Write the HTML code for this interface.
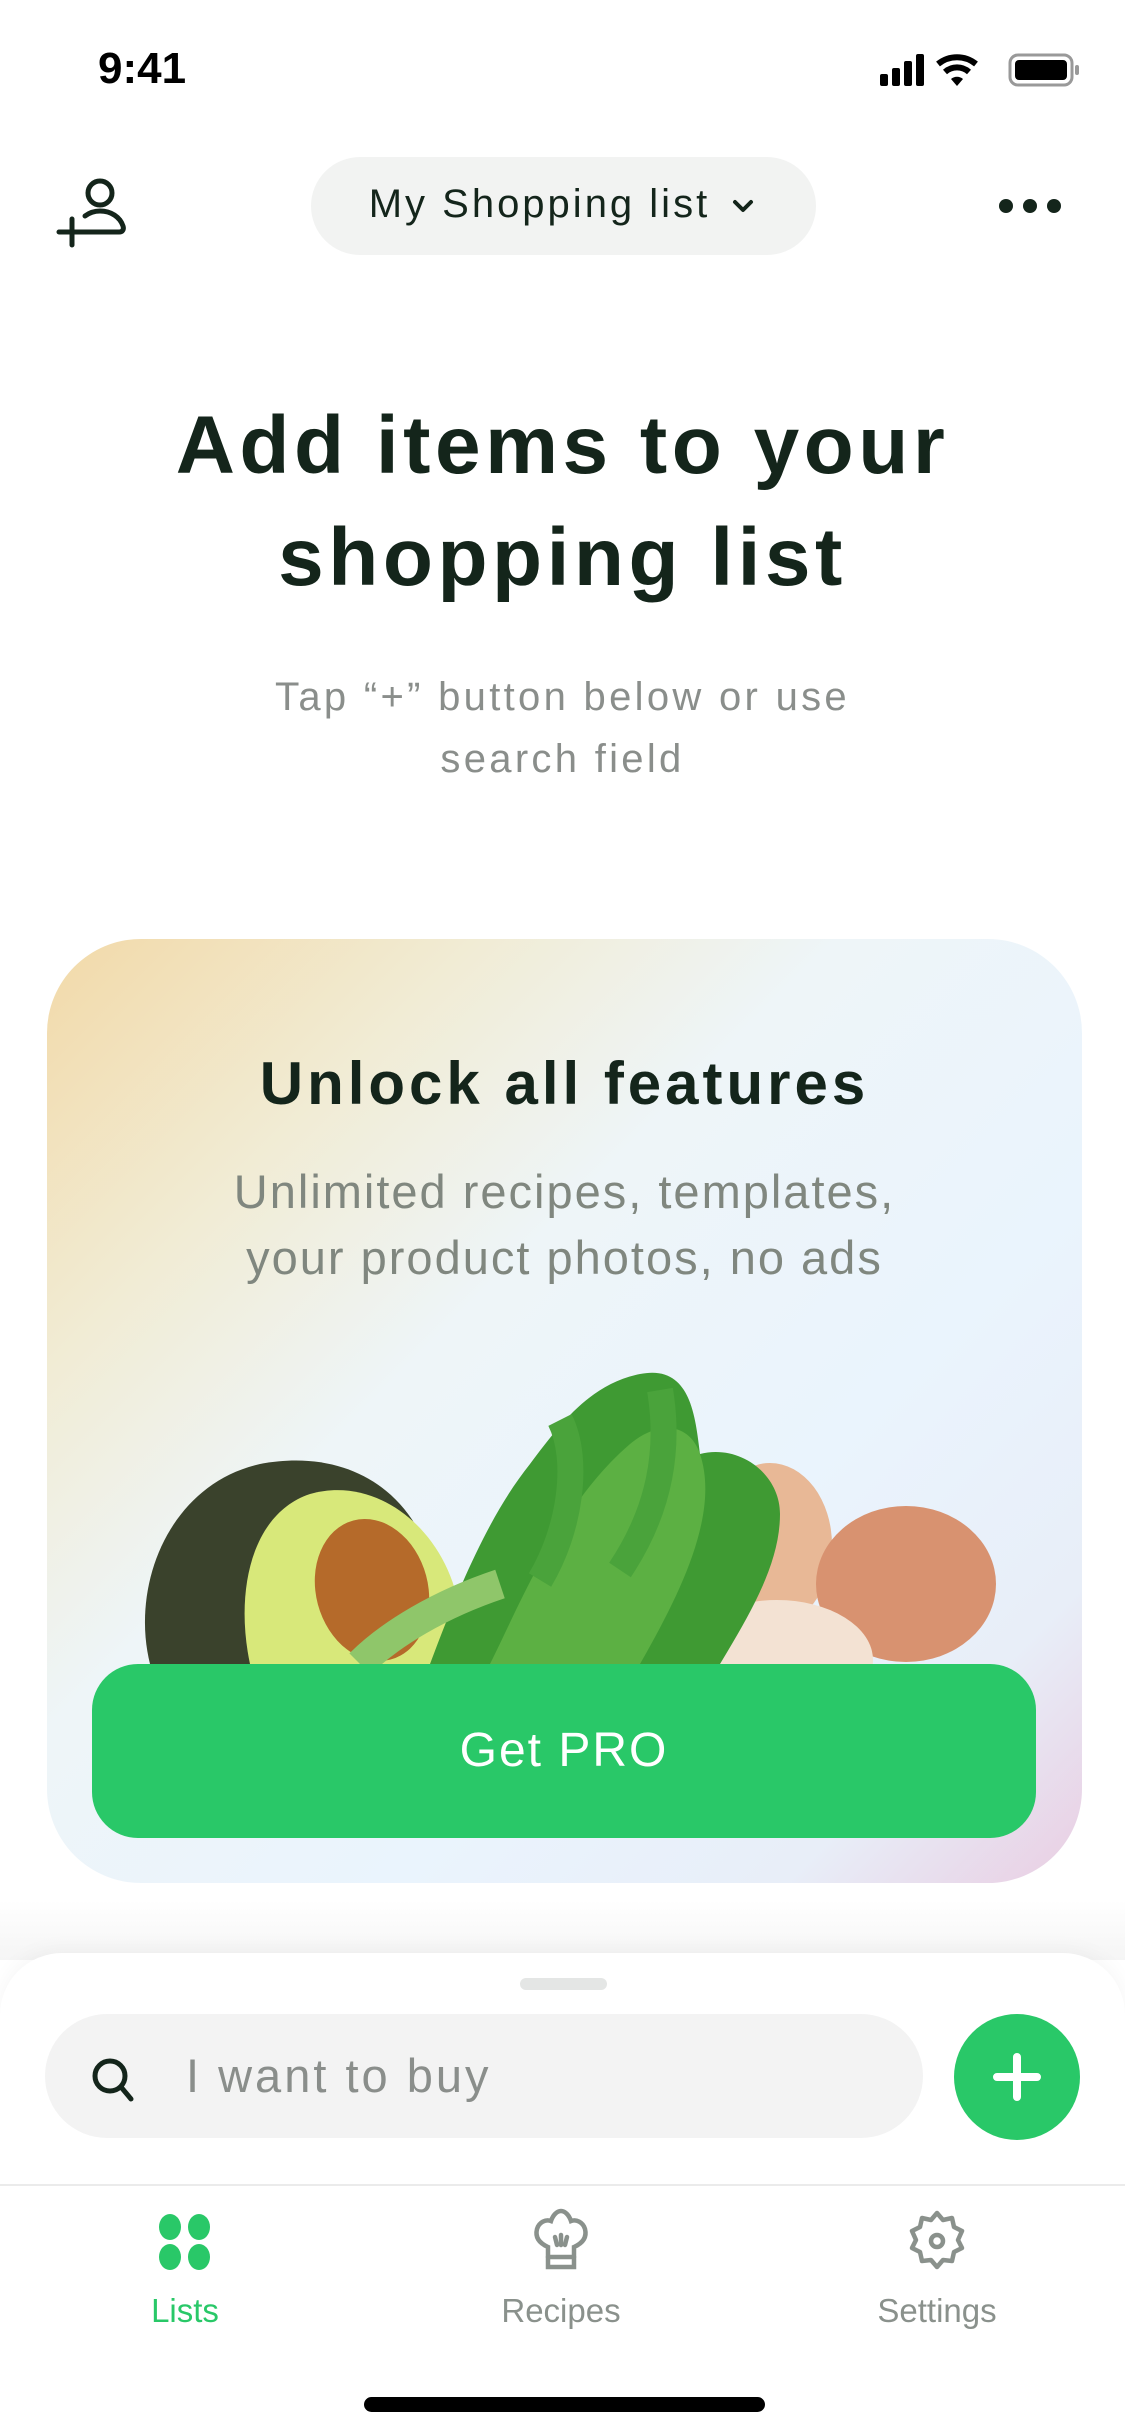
<!DOCTYPE html>
<html><head><meta charset="utf-8"><style>
*{margin:0;padding:0;box-sizing:border-box}
body{width:1125px;height:2436px;background:#fff;font-family:"Liberation Sans",sans-serif;position:relative;overflow:hidden;color:#14251b}
.abs{position:absolute}
.c{text-align:center;left:0;width:1125px}
</style></head><body>
<div class="abs" style="left:98px;top:44px;font-size:44px;font-weight:700;color:#000">9:41</div>
<svg class="abs" style="left:878px;top:50px" width="205" height="40" viewBox="0 0 205 40">
<rect x="2" y="24" width="8" height="12" rx="2" fill="#000"/><rect x="14" y="18" width="8" height="18" rx="2" fill="#000"/><rect x="26" y="11" width="8" height="25" rx="2" fill="#000"/><rect x="38" y="4" width="8" height="32" rx="2" fill="#000"/>
<path d="M60 14a30 30 0 0 1 38 0" stroke="#000" stroke-width="6" fill="none"/><path d="M67 22a18 18 0 0 1 24 0" stroke="#000" stroke-width="6" fill="none"/><path d="M73 29l6 7 6-7a9 9 0 0 0-12 0z" fill="#000"/>
<rect x="132" y="5" width="62" height="30" rx="8" fill="none" stroke="#999" stroke-width="3"/><rect x="137" y="10" width="52" height="20" rx="4" fill="#000"/><rect x="197" y="15" width="4" height="10" rx="2" fill="#999"/>
</svg>
<svg class="abs" style="left:56px;top:176px" width="72" height="72" viewBox="0 0 72 72">
<circle cx="44" cy="17" r="12" fill="none" stroke="#14251b" stroke-width="5"/><path d="M28 56h35c4 0 5-3 4-6-3-9-12-15-23-15-6 0-11 2-15 5" fill="none" stroke="#14251b" stroke-width="5" stroke-linecap="round"/><path d="M3 56h26M16 43v26" stroke="#14251b" stroke-width="5" stroke-linecap="round"/>
</svg>
<div class="abs" style="left:311px;top:157px;width:505px;height:98px;border-radius:49px;background:#f2f3f2"></div>
<div class="abs" style="left:311px;top:182px;width:505px;text-align:center;font-size:40px;font-weight:500;letter-spacing:3px">My Shopping list <svg width="30" height="30" viewBox="0 0 30 30" style="vertical-align:middle;margin-left:4px"><path d="M7 11l8 8 8-8" stroke="#14251b" stroke-width="4" fill="none" stroke-linecap="round" stroke-linejoin="round"/></svg></div>
<svg class="abs" style="left:996px;top:196px" width="68" height="20"><circle cx="10" cy="10" r="7" fill="#14251b"/><circle cx="34" cy="10" r="7" fill="#14251b"/><circle cx="58" cy="10" r="7" fill="#14251b"/></svg>
<div class="abs c" style="top:390px;font-size:82px;font-weight:700;line-height:112px;color:#14251b;letter-spacing:4.5px">Add items to your<br>shopping list</div>
<div class="abs c" style="top:666px;font-size:40px;line-height:62px;color:#8a8e8b;letter-spacing:3.3px">Tap “+” button below or use<br>search field</div>
<div class="abs" style="left:47px;top:939px;width:1035px;height:944px;border-radius:94px;overflow:hidden;background:linear-gradient(135deg,#f2d9a8 0%,#f1ecd5 22%,#eef5f8 40%,#eaf4fd 65%,#e8eef8 85%,#e9cde2 100%)">
<div class="abs" style="left:0;top:110px;width:1035px;text-align:center;font-size:60px;font-weight:700;color:#14251b;letter-spacing:4px">Unlock all features</div>
<div class="abs" style="left:0;top:220px;width:1035px;text-align:center;font-size:47px;line-height:66px;color:#80877f;letter-spacing:2px">Unlimited recipes, templates,<br>your product photos, no ads</div>
<svg class="abs" style="left:0;top:0" width="1035" height="944" viewBox="47 939 1035 944">
<ellipse cx="770" cy="1545" rx="62" ry="82" fill="#e8b896"/>
<ellipse cx="906" cy="1584" rx="90" ry="78" fill="#d89270"/>
<ellipse cx="777" cy="1660" rx="96" ry="60" fill="#f3e2d3"/>
<path d="M150 1664c-20-80 20-180 110-200 80-15 140 20 165 80l40 120z" fill="#3a422c"/>
<path d="M250 1664c-15-70 0-150 60-170 70-20 140 40 150 120l-20 50z" fill="#d8e87a"/>
<ellipse cx="372" cy="1590" rx="56" ry="72" transform="rotate(-15 372 1590)" fill="#b56a2a"/>
<path d="M430 1664c30-80 60-150 100-200 30-40 60-80 110-90 50-10 55 40 60 80 40-10 80 20 80 60 0 50-30 100-60 150z" fill="#3f9a33"/>
<path d="M490 1664c30-60 70-160 140-220 30-25 60-20 70 10 20 60-20 140-60 210z" fill="#5cb043"/>
<path d="M560 1420c20 40 10 110-20 160M660 1390c10 60 0 120-40 180" stroke="#4aa33b" stroke-width="26" fill="none"/>
<path d="M360 1664c30-30 80-60 140-80" stroke="#8fc66a" stroke-width="30" fill="none"/>
</svg>
</div>
<div class="abs" style="left:92px;top:1664px;width:944px;height:174px;border-radius:46px;background:#29c868;color:#fff;font-size:48px;font-weight:500;text-align:center;line-height:174px;letter-spacing:2px">Get PRO</div>
<div class="abs" style="left:0;top:1900px;width:1125px;height:60px;background:linear-gradient(#fff,#f5f5f5)"></div>
<div class="abs" style="left:0;top:1953px;width:1125px;height:483px;background:#fff;border-radius:62px 62px 0 0;box-shadow:0 -4px 20px rgba(0,0,0,0.04)"></div>
<div class="abs" style="left:520px;top:1978px;width:87px;height:12px;border-radius:6px;background:#e4e6e5"></div>
<div class="abs" style="left:45px;top:2014px;width:878px;height:124px;border-radius:62px;background:#f3f3f3"></div>
<svg class="abs" style="left:88px;top:2054px" width="52" height="52" viewBox="0 0 52 52"><circle cx="22" cy="22" r="15" fill="none" stroke="#14251b" stroke-width="5"/><path d="M33 33l10 12" stroke="#14251b" stroke-width="5" stroke-linecap="round"/></svg>
<div class="abs" style="left:186px;top:2048px;font-size:47px;color:#8a8e8b;letter-spacing:3px">I want to buy</div>
<div class="abs" style="left:954px;top:2014px;width:126px;height:126px;border-radius:50%;background:#29c868"></div>
<svg class="abs" style="left:990px;top:2050px" width="54" height="54"><path d="M27 7v40M7 27h40" stroke="#fff" stroke-width="8" stroke-linecap="round"/></svg>
<div class="abs" style="left:0;top:2184px;width:1125px;height:2px;background:#ebebeb"></div>
<svg class="abs" style="left:157px;top:2212px" width="56" height="60"><ellipse cx="13" cy="15" rx="11" ry="13" fill="#29c868"/><ellipse cx="42" cy="15" rx="11" ry="13" fill="#29c868"/><ellipse cx="13" cy="45" rx="11" ry="13" fill="#29c868"/><ellipse cx="42" cy="45" rx="11" ry="13" fill="#29c868"/></svg>
<svg class="abs" style="left:531px;top:2207px" width="60" height="66" viewBox="0 0 60 66" fill="none" stroke="#8a918c" stroke-width="4.5" stroke-linecap="round"><path d="M17 40c-9-4-13-10-11-18 2-7 9-10 14-8 2-6 6-10 10-10s8 4 10 10c5-2 12 1 14 8 2 8-2 14-11 18v20H17z"/><path d="M17 50h26M24 30l2 8M30 28v10M36 30l-2 8"/></svg>
<svg class="abs" style="left:906px;top:2209px" width="62" height="64" viewBox="0 0 62 64" fill="none" stroke="#8a918c" stroke-width="4.5"><path d="M31 4l6 7 9-2 2 9 8 4-4 9 4 8-8 4-2 9-9-1-6 7-6-7-9 1-2-9-8-4 4-8-4-9 8-4 2-9 9 2z" stroke-linejoin="round"/><circle cx="31" cy="32" r="6"/></svg>
<div class="abs" style="left:85px;top:2292px;width:200px;text-align:center;font-size:33px;color:#29c868">Lists</div>
<div class="abs" style="left:461px;top:2292px;width:200px;text-align:center;font-size:33px;color:#8a918c">Recipes</div>
<div class="abs" style="left:837px;top:2292px;width:200px;text-align:center;font-size:33px;color:#8a918c">Settings</div>
<div class="abs" style="left:364px;top:2397px;width:401px;height:15px;border-radius:8px;background:#000"></div>
</body></html>
